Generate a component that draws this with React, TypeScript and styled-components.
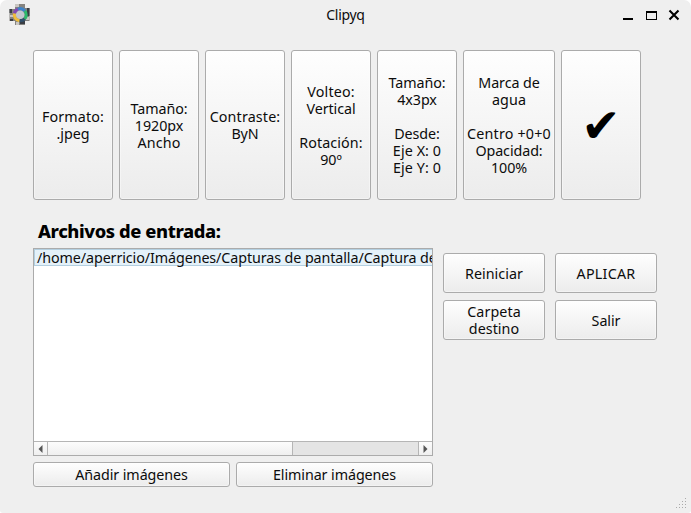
import React from 'react';
import styled, { createGlobalStyle } from 'styled-components';

const GlobalStyle = createGlobalStyle`
  * { box-sizing: border-box; }
  body { margin: 0; background: #fff; }
`;

const Window = styled.main`
  position: relative;
  width: 691px;
  height: 513px;
  display: flex;
  flex-direction: column;
  overflow: hidden;
  background: #efefef;
  border-radius: 7px 7px 3px 3px;
  color: #0c0c0c;
  font: 14.3px/17px "Noto Sans", sans-serif;
`;

const TitleBar = styled.header`
  height: 30px;
  flex: none;
  display: grid;
  grid-template-columns: 100px 1fr 100px;
  align-items: start;
`;

const AppIcon = styled.svg`
  width: 24px;
  height: 24px;
  margin: 3px 0 0 8px;
`;

const Title = styled.h1`
  margin: 6px 0 0;
  font-size: 14px;
  line-height: 17px;
  font-weight: 400;
  letter-spacing: -0.3px;
  text-align: center;
`;

const Controls = styled.svg`
  width: 100px;
  height: 30px;
`;

const Line = styled.span<{ $track?: number }>`
  display: block;
  min-height: 17px;
  white-space: nowrap;
  letter-spacing: ${({ $track = -0.08 }) => $track}px;
`;

const Button = styled.button<{ $w: number; $h: number }>`
  width: ${({ $w }) => $w}px;
  height: ${({ $h }) => $h}px;
  flex: none;
  display: flex;
  flex-direction: column;
  align-items: center;
  justify-content: center;
  padding: 0;
  border: 1px solid #ababab;
  border-radius: 3px;
  background: linear-gradient(#fefefe, #ececec);
  box-shadow: inset 0 0 0 1px rgba(255, 255, 255, 0.4);
  color: inherit;
  font: inherit;
`;

const Options = styled.section`
  display: flex;
  gap: 6px;
  margin: 20px 0 0 33px;
`;

const Check = styled.span`
  padding-top: 2px;
  font: 47px/50px "DejaVu Sans", sans-serif;
  color: #000;
`;

const Heading = styled.h2`
  margin: 20px 0 0 38px;
  height: 28px;
  font-size: 18.3px;
  line-height: 22px;
  font-weight: 800;
  letter-spacing: -0.4px;
  color: #000;
`;

const Body = styled.div`
  display: flex;
  gap: 10px;
  margin-left: 33px;
`;

const FileColumn = styled.section`
  width: 400px;
`;

const FileList = styled.div`
  height: 208px;
  display: flex;
  flex-direction: column;
  border: 1px solid #ababab;
  background: #fff;
`;

const FileRow = styled.div`
  height: 17px;
  flex: none;
  overflow-x: clip;
  overflow-y: visible;
  padding-left: 2px;
  border: 1px solid #b3cfe0;
  border-right: 0;
  background: #e4f1f9;
  line-height: 16px;
`;

const Scrollbar = styled.div`
  height: 14px;
  margin-top: auto;
  display: grid;
  grid-template-columns: 14px 245px 1fr 14px;
  border-top: 1px solid #b5b5b5;
  background: #e4e4e4;
`;

const ScrollPart = styled.div<{ $edge?: 'left' | 'right' }>`
  display: flex;
  align-items: center;
  justify-content: center;
  background: linear-gradient(#fcfcfc, #efefef);
  border: 0 solid #b5b5b5;
  border-left-width: ${({ $edge }) => ($edge === 'left' ? 1 : 0)}px;
  border-right-width: ${({ $edge }) => ($edge === 'right' ? 1 : 0)}px;
`;

const FileActions = styled.div`
  display: flex;
  gap: 6px;
  margin-top: 6px;
`;

const Actions = styled.section`
  display: grid;
  grid-template-columns: repeat(2, 102px);
  grid-auto-rows: 40px;
  gap: 7px 10px;
  align-content: start;
  margin-top: 5px;
`;

const Grip = styled.svg`
  position: absolute;
  right: 4px;
  bottom: 4px;
  width: 11px;
  height: 11px;
`;

type TextLine = [text: string, track?: number];

const options: { width: number; lines: TextLine[] }[] = [
  { width: 80, lines: [['Formato:', 0.1], ['.jpeg']] },
  { width: 80, lines: [['Tamaño:'], ['1920px'], ['Ancho', 0.15]] },
  { width: 80, lines: [['Contraste:', 0.15], ['ByN']] },
  { width: 80, lines: [['Volteo:', 0.15], ['Vertical'], [''], ['Rotación:', 0.1], ['90º']] },
  { width: 80, lines: [['Tamaño:'], ['4x3px'], [''], ['Desde:'], ['Eje X: 0', 0.1], ['Eje Y: 0', 0.1]] },
  { width: 92, lines: [['Marca de'], ['agua', 0.1], [''], ['Centro +0+0', 0.2], ['Opacidad:'], ['100%']] },
];

const actions: TextLine[][] = [
  [['Reiniciar', 0.05]],
  [['APLICAR', 0.25]],
  [['Carpeta', 0.1], ['destino', 0.05]],
  [['Salir']],
];

const gripDots = [
  [9, 0], [6, 3], [9, 3], [3, 6], [6, 6], [9, 6], [0, 9], [3, 9], [6, 9], [9, 9],
];

const Lines = ({ lines }: { lines: TextLine[] }) => (
  <>
    {lines.map(([text, track], i) => (
      <Line key={i} $track={track}>{text}</Line>
    ))}
  </>
);

export default function App() {
  return (
    <>
      <GlobalStyle />
      <Window>
        <TitleBar>
          <AppIcon viewBox="0 0 24 24">
            <path d="M7 1h10v4h4.500v13H17v4H7v-4H1.500V6H7z" fill="#85837f" />
            <path d="M7 1h4v3H7zM2 12h3v2H2zM18 14h3v3h-3zM8 19h3v3H8z" fill="#c9c6c2" />
            <path d="M1.500 6H4v4H1.500zM19 5h2.500v8H19zM2 16h3v2H2zM12 18h5v3h-5z" fill="#3a3e44" />
            <g fill="none" strokeWidth="3.2">
              <path d="M6.400 10.500A6 6 0 0 1 10 6.200" stroke="#8249b5" />
              <path d="M10 6.200A6 6 0 0 1 16.800 8" stroke="#3d83c8" />
              <path d="M16.800 8A6 6 0 0 1 16.600 15.800" stroke="#2dba6c" />
              <path d="M16.600 15.800A6 6 0 0 1 11.400 17.600" stroke="#31506b" />
              <path d="M11.400 17.600A6 6 0 0 1 6.400 10.500" stroke="#eebd3c" />
            </g>
            <circle cx="12.200" cy="11.800" r="4.300" fill="#c3c7d0" />
          </AppIcon>
          <Title>Clipyq</Title>
          <Controls viewBox="0 0 100 30">
            <path d="M32 18h10v2H32z" fill="#000" />
            <path d="M55 11h11v9H55zM56 13v6h9v-6z" fill="#000" fillRule="evenodd" />
            <path d="M78.5 10.5l9 9m0-9l-9 9" stroke="#000" strokeWidth="2.1" />
          </Controls>
        </TitleBar>
        <Options>
          {options.map(({ width, lines }, i) => (
            <Button key={i} $w={width} $h={150}>
              <Lines lines={lines} />
            </Button>
          ))}
          <Button $w={80} $h={150}>
            <Check>✔</Check>
          </Button>
        </Options>
        <Heading>Archivos de entrada:</Heading>
        <Body>
          <FileColumn>
            <FileList>
              <FileRow>
                <Line $track={-0.09}>/home/aperricio/Imágenes/Capturas de pantalla/Captura de</Line>
              </FileRow>
              <Scrollbar>
                <ScrollPart $edge="right">
                  <svg width="5" height="8"><path d="M4.5 0v8L.5 4z" fill="#555" /></svg>
                </ScrollPart>
                <ScrollPart $edge="right" />
                <div />
                <ScrollPart $edge="left">
                  <svg width="5" height="8"><path d="M.5 0v8l4-4z" fill="#555" /></svg>
                </ScrollPart>
              </Scrollbar>
            </FileList>
            <FileActions>
              <Button $w={197} $h={25}><Line>Añadir imágenes</Line></Button>
              <Button $w={197} $h={25}><Line>Eliminar imágenes</Line></Button>
            </FileActions>
          </FileColumn>
          <Actions>
            {actions.map((lines, i) => (
              <Button key={i} $w={102} $h={40}>
                <Lines lines={lines} />
              </Button>
            ))}
          </Actions>
        </Body>
        <Grip viewBox="0 0 11 11">
          {gripDots.map(([x, y]) => (
            <rect key={`${x}-${y}`} x={x} y={y} width="1" height="1" fill="#aaa" />
          ))}
        </Grip>
      </Window>
    </>
  );
}
